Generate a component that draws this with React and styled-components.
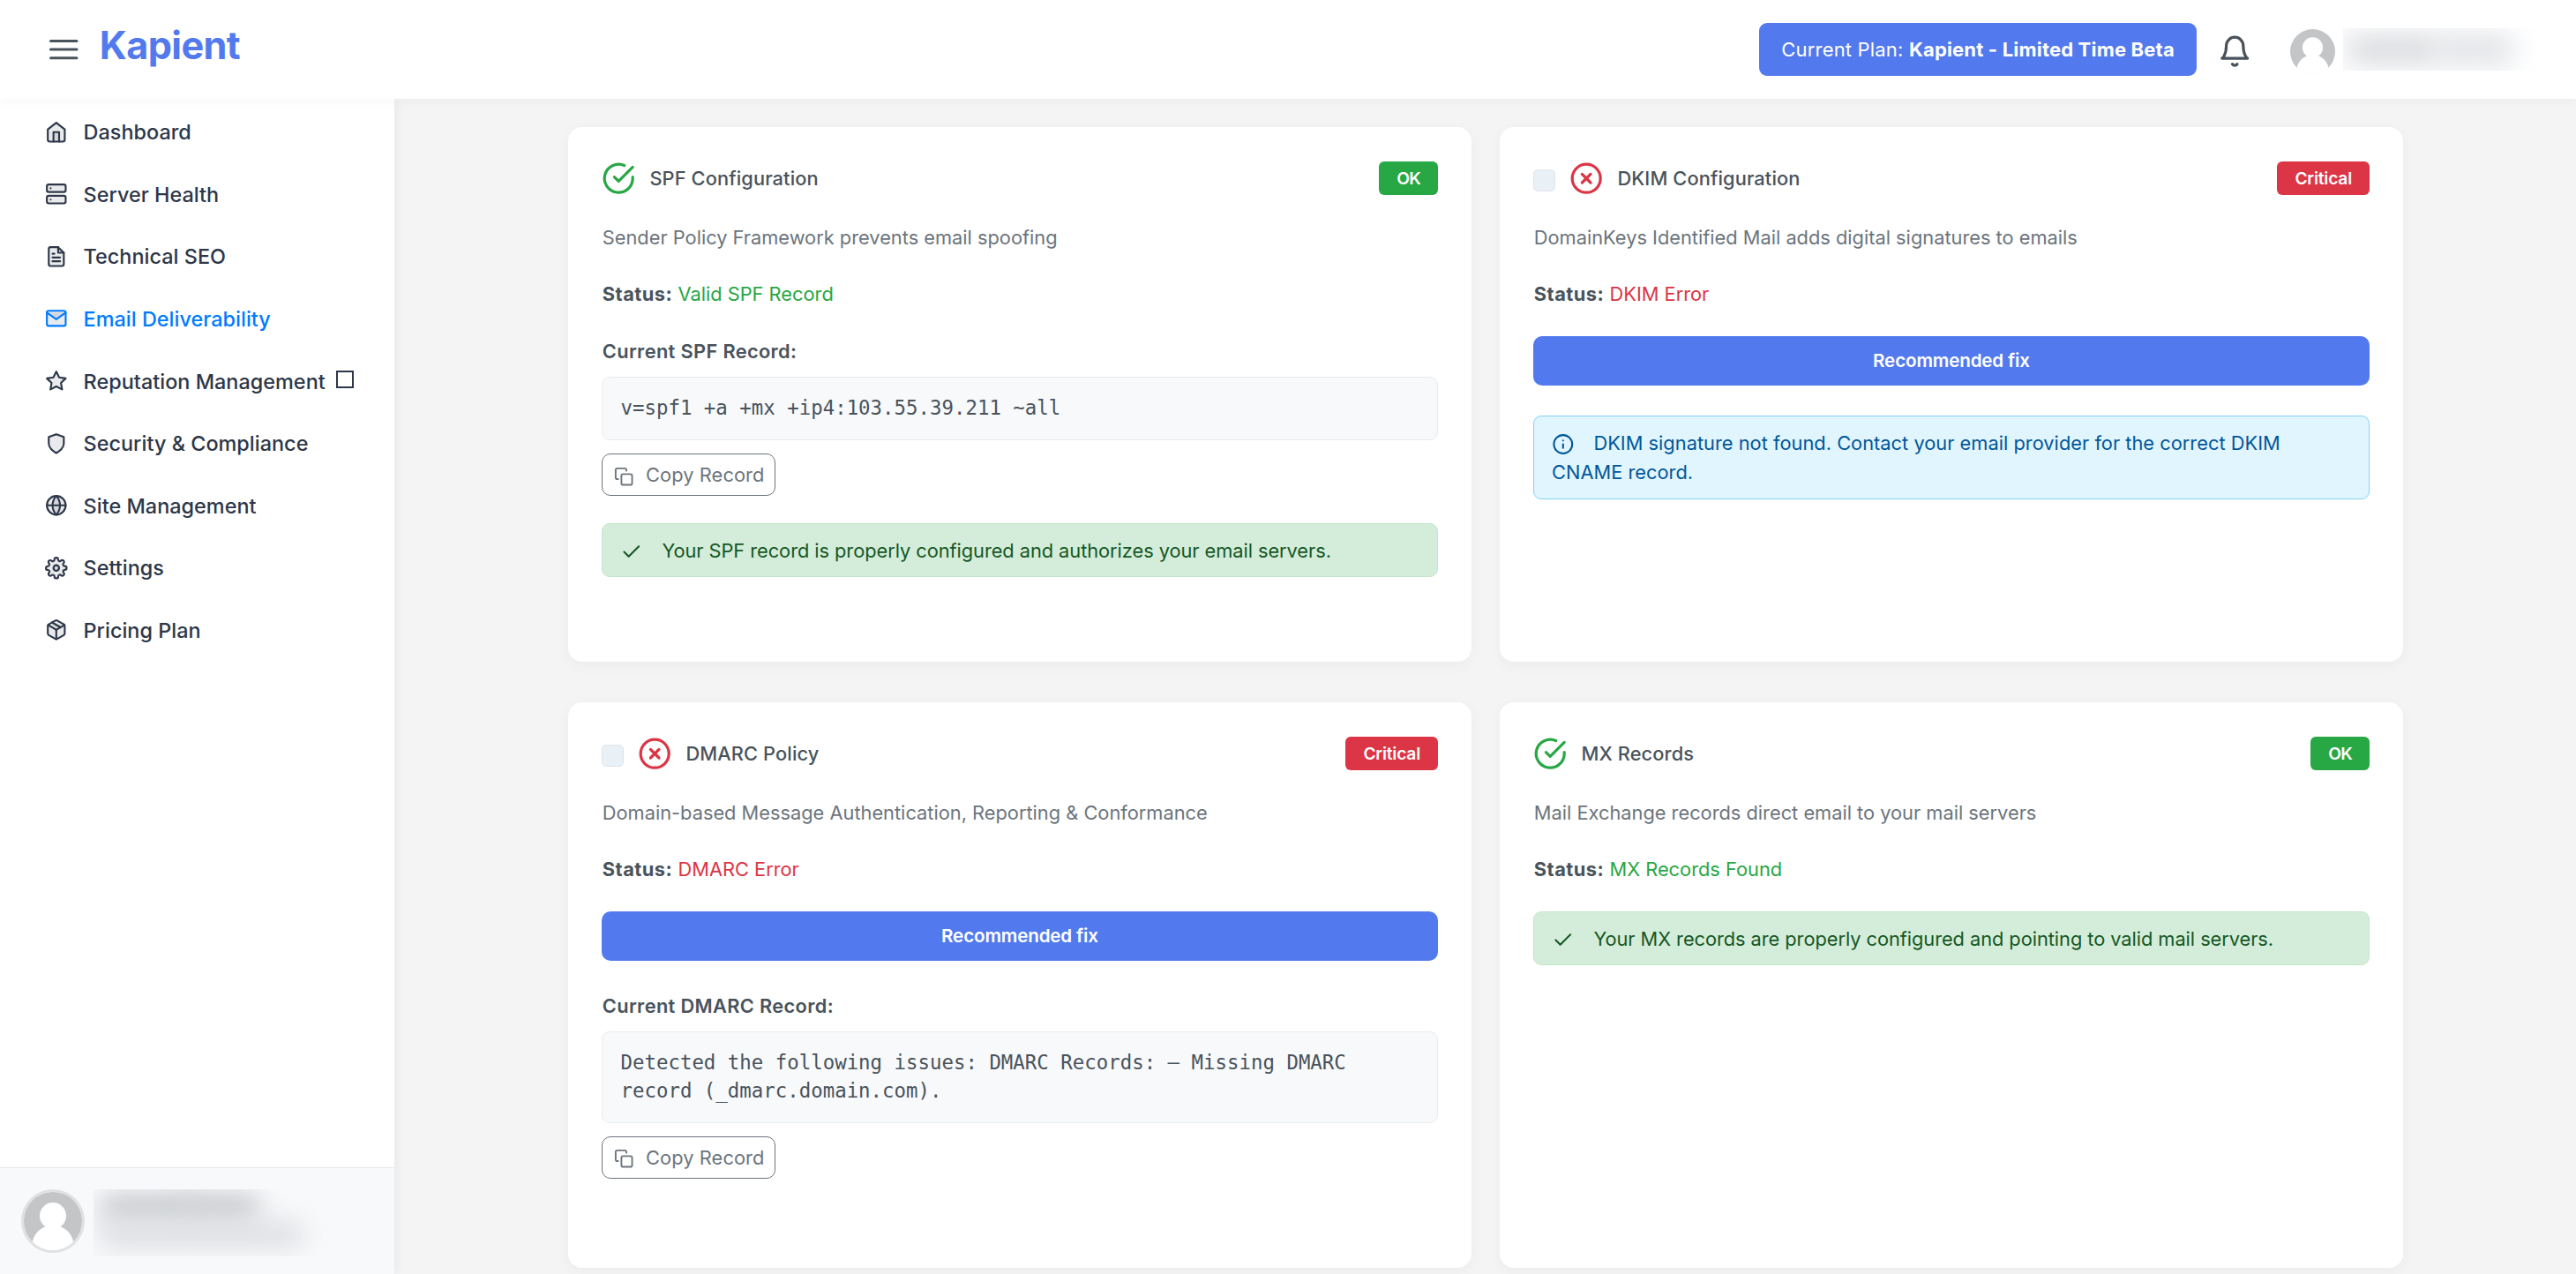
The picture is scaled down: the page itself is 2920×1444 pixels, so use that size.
import React from "react";
import styled, { createGlobalStyle, css } from "styled-components";

const GlobalStyle = createGlobalStyle`
  *, *::before, *::after { box-sizing: border-box; }
  body {
    margin: 0;
    background: #f4f4f4;
    color: #49535c;
    font-family: Inter, "Liberation Sans", sans-serif;
    font-size: 21.8px;
    line-height: 32px;
  }
`;

const Page = styled.div`
  display: flex;
  flex-direction: column;
  height: 100vh;
  overflow: hidden;
`;

/* ---------- top bar ---------- */

const TopBar = styled.header`
  position: relative;
  z-index: 2;
  flex: none;
  display: flex;
  align-items: center;
  height: 112px;
  padding: 0 40px 0 56px;
  background: #fff;
  box-shadow: 0 3px 12px rgba(20, 40, 80, 0.04);
`;

const MenuButton = styled.button`
  display: flex;
  padding: 0;
  border: 0;
  background: none;
  color: #49535c;
`;

const Logo = styled.div`
  margin-left: 24.3px;
  padding-bottom: 10px;
  color: #527aee;
  font-size: 43.2px;
  font-weight: 700;
  letter-spacing: -0.6px;
  line-height: 52px;
`;

const PlanButton = styled.button`
  display: flex;
  align-items: center;
  justify-content: center;
  width: 496px;
  height: 60px;
  margin-left: auto;
  padding: 0;
  border: 0;
  border-radius: 9px;
  background: #527aee;
  color: #fff;
  font: inherit;
  font-size: 22px;
  letter-spacing: 0.18px;
  white-space: pre;
`;

const BellButton = styled.button`
  display: flex;
  margin: 4px 0 0 24px;
  padding: 0;
  border: 0;
  background: none;
  color: #49535c;
`;

const Redacted = styled.div`
  position: relative;
  flex: none;
  width: ${(p) => p.$w}px;
  height: ${(p) => p.$h}px;
  overflow: hidden;
  background: ${(p) => p.$bg || "transparent"};
`;

const Smudge = styled.span`
  position: absolute;
  left: ${(p) => p.$x}px;
  top: ${(p) => p.$y}px;
  width: ${(p) => p.$w}px;
  height: ${(p) => p.$h}px;
  border-radius: 12px;
  background: ${(p) => p.$c};
  filter: blur(14px);
`;

const HeaderUser = styled.div`
  display: flex;
  align-items: flex-start;
  gap: 9px;
  margin: 4px 0 0 43.5px;
`;

const HeaderName = styled.div`
  margin-top: -1px;
`;

/* ---------- side bar ---------- */

const Body = styled.div`
  display: flex;
  flex: 1;
  min-height: 0;
`;

const SideBar = styled.aside`
  position: relative;
  z-index: 1;
  flex: none;
  display: flex;
  flex-direction: column;
  width: 447px;
  background: #fff;
  box-shadow: 2px 0 10px rgba(0, 0, 0, 0.05);
`;

const Nav = styled.nav`
  display: flex;
  flex: 1;
  flex-direction: column;
  padding: 2.2px 0 0 51.2px;
`;

const NavItem = styled.a`
  display: flex;
  align-items: center;
  gap: 17.8px;
  height: 70.6px;
  color: ${(p) => (p.$active ? "#007bff" : "#2d3748")};
  font-size: 23.4px;
  font-weight: 500;
  letter-spacing: 0.03px;
  white-space: nowrap;
`;

const NavLabel = styled.span`
  padding-top: 1.4px;
`;

const MissingGlyph = styled.span`
  width: 20px;
  height: 19.5px;
  margin: -4px 0 0 -6px;
  border: 2px solid currentColor;
`;

const SideFooter = styled.div`
  flex: none;
  display: flex;
  align-items: flex-start;
  gap: 10px;
  height: 121px;
  padding: 24px;
  border-top: 1px solid #e4e7eb;
  background: #f8f9fb;
`;

const AvatarRing = styled.div`
  display: flex;
  border: 3px solid #e0e1e3;
  border-radius: 50%;
`;

/* ---------- cards ---------- */

const Main = styled.main`
  flex: 1;
  display: flex;
  justify-content: center;
  align-items: flex-start;
  padding: 32px 0 0 1px;
`;

const CardGrid = styled.div`
  display: grid;
  grid-template-columns: 1024px 1024px;
  grid-template-rows: 606px 641px;
  gap: 46px 32px;
`;

const CardBox = styled.section`
  padding: 38px;
  border-radius: 16px;
  background: #fff;
  box-shadow: 0 4px 16px rgba(0, 0, 0, 0.04);
`;

const CardHead = styled.div`
  display: flex;
  align-items: center;
  gap: 16px;
  height: 40px;
`;

const CheckBox = styled.span`
  width: 25px;
  height: 25px;
  margin-top: 4px;
  border: 1px solid #dfe5ea;
  border-radius: 5px;
  background: #e9f1f6;
`;

const CardTitle = styled.h2`
  margin: 0;
  font-size: 21.8px;
  font-weight: 500;
  letter-spacing: 0.12px;
`;

const Badge = styled.span`
  margin-left: auto;
  padding: 0 20px;
  border-radius: 6px;
  background: ${(p) => (p.$ok ? "#28a745" : "#dc3545")};
  color: #fff;
  font-size: 19.2px;
  font-weight: 600;
  letter-spacing: ${(p) => (p.$ok ? -0.8 : -0.2)}px;
  line-height: 38px;
`;

const Description = styled.p`
  margin: 31px 0 0 0.8px;
  color: #6c757d;
`;

const StatusLine = styled.p`
  margin: 32px 0 0 0.8px;
  color: ${(p) => (p.$ok ? "#28a745" : "#dc3545")};
`;

const StatusLabel = styled.strong`
  color: #49535c;
  font-weight: 700;
  letter-spacing: 0.5px;
`;

const FixButton = styled.button`
  display: block;
  width: 100%;
  height: 56px;
  margin-top: 32px;
  padding: 0;
  border: 0;
  border-radius: 10px;
  background: #527aee;
  color: #fff;
  font: inherit;
  font-size: 20.6px;
  font-weight: 600;
  letter-spacing: -0.15px;
`;

const RecordLabel = styled.div`
  margin: ${(p) => (p.$afterButton ? 35 : 33)}px 0 0 0.8px;
  font-weight: 600;
  letter-spacing: 0.35px;
`;

const RecordCode = styled.pre`
  margin: 13px 0 0;
  padding: 19.25px 20px 19.25px 20.5px;
  border: 1px solid #e9ecef;
  border-radius: 9px;
  background: #f8f9fb;
  font-family: "DejaVu Sans Mono", "Liberation Mono", monospace;
  font-size: 22.4px;
  line-height: 31.5px;
  white-space: pre-wrap;
`;

const CopyButton = styled.button`
  display: flex;
  align-items: center;
  gap: 13.4px;
  width: 197px;
  height: 48px;
  margin-top: 15px;
  padding: 0 0 0 13.3px;
  border: 1px solid #6c757d;
  border-radius: 10px;
  background: #fff;
  color: #6c757d;
  font: inherit;
  letter-spacing: 0.09px;

  svg { margin-top: 4px; }
`;

const alertTones = {
  success: css`
    border-color: #c3e6cb;
    background: #d4edda;
    color: #155724;
  `,
  info: css`
    padding-bottom: 13.5px;
    border-color: #81d4fa;
    background: #e1f5fe;
    color: #01579b;
    letter-spacing: 0.02px;
  `,
};

const Alert = styled.div`
  margin-top: ${(p) => p.$top}px;
  padding: 13.5px 20px 12.5px;
  border: 1px solid;
  border-radius: 9px;
  line-height: 33px;
  letter-spacing: -0.05px;
  ${(p) => alertTones[p.$tone]}

  svg {
    height: 25px;
    margin-right: 21.8px;
    vertical-align: -6.5px;
  }
`;

/* ---------- icons ---------- */

const Icon = ({ size = 25.6, fill = "none", children }) => (
  <svg
    width={size}
    height={size}
    viewBox="0 0 24 24"
    fill={fill}
    stroke="currentColor"
    strokeWidth="2"
    strokeLinecap="round"
    strokeLinejoin="round"
    overflow="visible"
  >
    {children}
  </svg>
);

const tint = "rgba(40, 50, 65, 0.1)";

const navIcons = {
  home: (
    <>
      <path d="M3 9l9-7 9 7v11a2 2 0 0 1-2 2H5a2 2 0 0 1-2-2z" />
      <polyline points="9 22 9 12 15 12 15 22" />
    </>
  ),
  server: (
    <>
      <rect x="2" y="2" width="20" height="8" rx="2" />
      <rect x="2" y="14" width="20" height="8" rx="2" />
      <line x1="6" y1="6" x2="6.01" y2="6" />
      <line x1="6" y1="18" x2="6.01" y2="18" />
    </>
  ),
  file: (
    <>
      <path d="M14 2H6a2 2 0 0 0-2 2v16a2 2 0 0 0 2 2h12a2 2 0 0 0 2-2V8z" />
      <polyline points="14 2 14 8 20 8" />
      <line x1="16" y1="13" x2="8" y2="13" />
      <line x1="16" y1="17" x2="8" y2="17" />
      <polyline points="10 9 9 9 8 9" />
    </>
  ),
  mail: (
    <>
      <path d="M4 4h16c1.1 0 2 .9 2 2v12c0 1.1-.9 2-2 2H4c-1.1 0-2-.9-2-2V6c0-1.1.9-2 2-2z" />
      <polyline points="22 6 12 13 2 6" />
    </>
  ),
  star: (
    <polygon points="12 2 15.09 8.26 22 9.27 17 14.14 18.18 21.02 12 17.77 5.82 21.02 7 14.14 2 9.27 8.91 8.26 12 2" />
  ),
  shield: <path d="M12 22s8-4 8-10V5l-8-3-8 3v7c0 6 8 10 8 10z" />,
  globe: (
    <>
      <circle cx="12" cy="12" r="10" />
      <line x1="2" y1="12" x2="22" y2="12" />
      <path d="M12 2a15.3 15.3 0 0 1 4 10 15.3 15.3 0 0 1-4 10 15.3 15.3 0 0 1-4-10 15.3 15.3 0 0 1 4-10z" />
    </>
  ),
  settings: (
    <>
      <circle cx="12" cy="12" r="3" />
      <path d="M19.4 15a1.65 1.65 0 0 0 .33 1.82l.06.06a2 2 0 0 1 0 2.83 2 2 0 0 1-2.83 0l-.06-.06a1.65 1.65 0 0 0-1.82-.33 1.65 1.65 0 0 0-1 1.51V21a2 2 0 0 1-2 2 2 2 0 0 1-2-2v-.09A1.65 1.65 0 0 0 9 19.4a1.65 1.65 0 0 0-1.82.33l-.06.06a2 2 0 0 1-2.83 0 2 2 0 0 1 0-2.83l.06-.06a1.65 1.65 0 0 0 .33-1.82 1.65 1.65 0 0 0-1.51-1H3a2 2 0 0 1-2-2 2 2 0 0 1 2-2h.09A1.65 1.65 0 0 0 4.6 9a1.65 1.65 0 0 0-.33-1.82l-.06-.06a2 2 0 0 1 0-2.83 2 2 0 0 1 2.83 0l.06.06a1.65 1.65 0 0 0 1.82.33H9a1.65 1.65 0 0 0 1-1.51V3a2 2 0 0 1 2-2 2 2 0 0 1 2 2v.09a1.65 1.65 0 0 0 1 1.51 1.65 1.65 0 0 0 1.82-.33l.06-.06a2 2 0 0 1 2.83 0 2 2 0 0 1 0 2.83l-.06.06a1.65 1.65 0 0 0-.33 1.82V9a1.65 1.65 0 0 0 1.51 1H21a2 2 0 0 1 2 2 2 2 0 0 1-2 2h-.09a1.65 1.65 0 0 0-1.51 1z" />
    </>
  ),
  box: (
    <>
      <path d="M21 16V8a2 2 0 0 0-1-1.73l-7-4a2 2 0 0 0-2 0l-7 4A2 2 0 0 0 3 8v8a2 2 0 0 0 1 1.73l7 4a2 2 0 0 0 2 0l7-4A2 2 0 0 0 21 16z" />
      <line x1="16.5" y1="9.4" x2="7.5" y2="4.21" />
      <polyline points="3.27 6.96 12 12.01 20.73 6.96" />
      <line x1="12" y1="22.08" x2="12" y2="12" />
    </>
  ),
};

const OkIcon = () => (
  <Icon size={38.4}>
    <path d="M22 11.08V12a10 10 0 1 1-5.93-9.14" />
    <polyline points="22 4 12 14.01 9 11.01" />
  </Icon>
);

const ErrorIcon = () => (
  <Icon size={38.4}>
    <circle cx="12" cy="12" r="10" />
    <line x1="15" y1="9" x2="9" y2="15" />
    <line x1="9" y1="9" x2="15" y2="15" />
  </Icon>
);

const StateIcon = styled.span`
  display: flex;
  color: ${(p) => (p.$ok ? "#28a745" : "#dc3545")};
`;

const Avatar = ({ size }) => (
  <svg width={size} height={size} viewBox="0 0 100 100">
    <clipPath id={`face-${size}`}>
      <circle cx="50" cy="50" r="50" />
    </clipPath>
    <g clipPath={`url(#face-${size})`}>
      <rect width="100" height="100" fill="#c4c5c7" />
      <circle cx="50" cy="41" r="22.7" fill="#fff" />
      <circle cx="50" cy="93" r="36" fill="#fff" />
      <rect x="14" y="88" width="72" height="12" fill="#fff" />
    </g>
  </svg>
);

/* ---------- composition ---------- */

const navItems = [
  { icon: "home", label: "Dashboard" },
  { icon: "server", label: "Server Health" },
  { icon: "file", label: "Technical SEO" },
  { icon: "mail", label: "Email Deliverability", active: true },
  { icon: "star", label: "Reputation Management", glyph: true },
  { icon: "shield", label: "Security & Compliance" },
  { icon: "globe", label: "Site Management" },
  { icon: "settings", label: "Settings" },
  { icon: "box", label: "Pricing Plan" },
];

const Record = ({ label, value, afterButton }) => (
  <>
    <RecordLabel $afterButton={afterButton}>{label}</RecordLabel>
    <RecordCode>{value}</RecordCode>
    <CopyButton>
      <Icon size={22.4}>
        <rect x="9" y="9" width="13" height="13" rx="2" />
        <path d="M5 15H4a2 2 0 0 1-2-2V4a2 2 0 0 1 2-2h9a2 2 0 0 1 2 2v1" />
      </Icon>
      Copy Record
    </CopyButton>
  </>
);

const Success = ({ top, children }) => (
  <Alert $tone="success" $top={top}>
    <Icon>
      <polyline points="20 6 9 17 4 12" />
    </Icon>
    {children}
  </Alert>
);

const Info = ({ children }) => (
  <Alert $tone="info" $top={34}>
    <Icon>
      <circle cx="12" cy="12" r="10" />
      <line x1="12" y1="16" x2="12" y2="12" />
      <line x1="12" y1="8" x2="12.01" y2="8" />
    </Icon>
    {children}
  </Alert>
);

const Card = ({ ok, title, description, status, children }) => (
  <CardBox>
    <CardHead>
      {!ok && <CheckBox />}
      <StateIcon $ok={ok}>{ok ? <OkIcon /> : <ErrorIcon />}</StateIcon>
      <CardTitle>{title}</CardTitle>
      <Badge $ok={ok}>{ok ? "OK" : "Critical"}</Badge>
    </CardHead>
    <Description>{description}</Description>
    <StatusLine $ok={ok}>
      <StatusLabel>Status:</StatusLabel> {status}
    </StatusLine>
    {!ok && <FixButton>Recommended fix</FixButton>}
    {children}
  </CardBox>
);

export default function App() {
  return (
    <Page>
      <GlobalStyle />
      <TopBar>
        <MenuButton>
          <svg width="32.5" height="24" viewBox="0 0 32.5 24" stroke="currentColor" strokeWidth="3" strokeLinecap="round">
            <path d="M1.5 2.4h29.5M1.5 12.1h29.5M1.5 21.7h29.5" />
          </svg>
        </MenuButton>
        <Logo>Kapient</Logo>
        <PlanButton>
          Current Plan: <b>Kapient - Limited Time Beta</b>
        </PlanButton>
        <BellButton>
          <Icon size={38.4}>
            <path d="M18 8A6 6 0 0 0 6 8c0 7-3 9-3 9h18s-3-2-3-9" />
            <path d="M13.73 21a2 2 0 0 1-3.46 0" />
          </Icon>
        </BellButton>
        <HeaderUser>
          <Avatar size={51} />
          <HeaderName>
            <Redacted $w={224} $h={48} $bg="linear-gradient(90deg, #fbfcfd 80%, #ffffff)">
              <Smudge $x={6} $y={9} $w={102} $h={30} $c="#d9dbde" />
              <Smudge $x={104} $y={10} $w={88} $h={28} $c="#dfe1e4" />
            </Redacted>
          </HeaderName>
        </HeaderUser>
      </TopBar>
      <Body>
        <SideBar>
          <Nav>
            {navItems.map((item) => (
              <NavItem key={item.label} $active={item.active}>
                <Icon fill={tint}>{navIcons[item.icon]}</Icon>
                <NavLabel>{item.label}</NavLabel>
                {item.glyph && <MissingGlyph />}
              </NavItem>
            ))}
          </Nav>
          <SideFooter>
            <AvatarRing>
              <Avatar size={66} />
            </AvatarRing>
            <Redacted $w={270} $h={76}>
              <Smudge $x={8} $y={5} $w={106} $h={32} $c="#c8cace" />
              <Smudge $x={100} $y={5} $w={88} $h={32} $c="#c8cace" />
              <Smudge $x={6} $y={36} $w={232} $h={30} $c="#dddfe2" />
            </Redacted>
          </SideFooter>
        </SideBar>
        <Main>
          <CardGrid>
            <Card
              ok
              title="SPF Configuration"
              description="Sender Policy Framework prevents email spoofing"
              status="Valid SPF Record"
            >
              <Record label="Current SPF Record:" value="v=spf1 +a +mx +ip4:103.55.39.211 ~all" />
              <Success top={31}>Your SPF record is properly configured and authorizes your email servers.</Success>
            </Card>
            <Card
              title="DKIM Configuration"
              description="DomainKeys Identified Mail adds digital signatures to emails"
              status="DKIM Error"
            >
              <Info>
                DKIM signature not found. Contact your email provider for the correct DKIM CNAME record.
              </Info>
            </Card>
            <Card
              title="DMARC Policy"
              description="Domain-based Message Authentication, Reporting & Conformance"
              status="DMARC Error"
            >
              <Record
                afterButton
                label="Current DMARC Record:"
                value="Detected the following issues: DMARC Records: – Missing DMARC record (_dmarc.domain.com)."
              />
            </Card>
            <Card
              ok
              title="MX Records"
              description="Mail Exchange records direct email to your mail servers"
              status="MX Records Found"
            >
              <Success top={32}>Your MX records are properly configured and pointing to valid mail servers.</Success>
            </Card>
          </CardGrid>
        </Main>
      </Body>
    </Page>
  );
}
